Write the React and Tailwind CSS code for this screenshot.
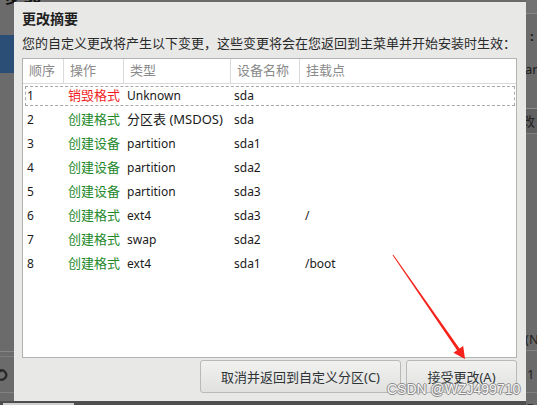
import React from "react";

const rows = [
  ["1", "销毁格式", true, "Unknown", "sda", ""],
  ["2", "创建格式", false, "分区表 (MSDOS)", "sda", ""],
  ["3", "创建设备", false, "partition", "sda1", ""],
  ["4", "创建设备", false, "partition", "sda2", ""],
  ["5", "创建设备", false, "partition", "sda3", ""],
  ["6", "创建格式", false, "ext4", "sda3", "/"],
  ["7", "创建格式", false, "swap", "sda2", ""],
  ["8", "创建格式", false, "ext4", "sda1", "/boot"],
];

function LeftStrip() {
  return (
    <div className="w-[14px] h-full flex flex-col bg-[#6b6b6b]">
      <div className="h-[35px] shrink-0" />
      <div className="h-[38px] shrink-0 bg-[#2a4e76]" />
      <div className="flex-1" />
      <div className="h-[1px] bg-[#868686]" />
      <div className="h-[4px]" />
      <div className="h-[1px] bg-[#7c7c7c]" />
      <div className="h-[11px]" />
      <div className="h-[14px] flex items-center">
        <svg width="10" height="14" viewBox="0 0 10 14" className="-ml-[2px]">
          <path d="M1 3.2 A4.6 4.6 0 1 1 1 10.8" fill="none" stroke="#262626" strokeWidth="2.2" />
          <path d="M0 0.5 L4.5 3.2 L0 5.6 Z" fill="#262626" />
        </svg>
      </div>
      <div className="h-[10px]" />
      <div className="h-[1px] bg-[#828282]" />
      <div className="h-[12px]" />
    </div>
  );
}

function RightStrip() {
  return (
    <div className="w-[11px] h-full flex flex-col bg-[#6b6b6b] text-[#1c1c1c] text-[13px] leading-none overflow-hidden">
      <div className="h-[13px] bg-[#737373] shrink-0" />
      <div className="h-[1px] bg-[#888888] shrink-0" />
      <div className="h-[16px] shrink-0" />
      <div className="pl-[4px] h-[12px] font-bold shrink-0">:</div>
      <div className="h-[21px] shrink-0" />
      <div className="h-[14px] -ml-[1px] shrink-0">ar</div>
      <div className="h-[31px] shrink-0" />
      <div className="h-[1px] bg-[#8e8e8e] shrink-0" />
      <div className="h-[24px] bg-[#606060] flex items-center -ml-[4px] text-[#222] shrink-0">改</div>
      <div className="h-[1px] bg-[#808080] shrink-0" />
      <div className="flex-1" />
      <div className="h-[14px] -ml-[1px] text-[#222] shrink-0">(N</div>
      <div className="h-[3px] shrink-0" />
      <div className="h-[1px] bg-[#858585] shrink-0" />
      <div className="h-[17px] shrink-0" />
      <div className="h-[14px] pl-[1px] text-[#222] shrink-0">1</div>
      <div className="h-[10px] shrink-0" />
      <div className="h-[1px] bg-[#808080] shrink-0" />
      <div className="h-[4px] shrink-0" />
      <div className="h-[8px] pl-[1px] text-[#333] shrink-0">–</div>
    </div>
  );
}

function Table() {
  return (
    <div className="w-[495px] h-[300px] bg-white border border-[#b3b3b1] flex flex-col">
      <div className="h-[25px] flex border-b border-[#dadada] text-[13px] text-[#8a8a8a] shrink-0">
        <div className="w-[41px] border-r border-[#dadada] pl-[6px] flex items-center">顺序</div>
        <div className="w-[60px] border-r border-[#dadada] pl-[6px] flex items-center">操作</div>
        <div className="w-[107px] border-r border-[#dadada] pl-[6px] flex items-center">类型</div>
        <div className="w-[69px] border-r border-[#dadada] pl-[6px] flex items-center">设备名称</div>
        <div className="flex-1 pl-[6px] flex items-center">挂载点</div>
      </div>
      {rows.map((r, i) => (
        <div key={i} className="relative h-[24px] flex items-center text-[12px] text-[#1a1a1a] shrink-0">
          {i === 0 && (
            <div className="absolute top-[2px] bottom-[2px] left-[2px] right-[1px] border border-dashed border-[#a8a8a8]" />
          )}
          <div className="w-[41px] pl-[4px]">{r[0]}</div>
          <div className={"w-[60px] pl-[4px] text-[13px] " + (r[2] ? "text-[#f01e1e]" : "text-[#24882a]")}>{r[1]}</div>
          <div className={"w-[107px] pl-[3px] " + (r[3].startsWith("分") ? "text-[13px]" : "")}>{r[3]}</div>
          <div className="w-[69px] pl-[3px]">{r[4]}</div>
          <div className="flex-1 pl-[5px]">{r[5]}</div>
        </div>
      ))}
      <div className="flex-1" />
    </div>
  );
}

function Btn({ w, children }) {
  return (
    <div
      className={
        "h-[33px] rounded-[3px] border border-[#b9b9b6] bg-gradient-to-b from-[#f1f1f0] to-[#e1e1df] flex items-center justify-center text-[13px] text-[#2e3436] pt-[3px] " +
        w
      }
    >
      {children}
    </div>
  );
}

export default function App() {
  return (
    <div className="relative w-[537px] h-[405px] overflow-hidden bg-[#6b6b6b] font-['Noto_Sans','Noto_Sans_CJK_SC',sans-serif]">
      <div className="flex justify-between h-full">
        <LeftStrip />
        <RightStrip />
      </div>

      {/* top heading fragment behind dialog */}
      <div className="absolute left-[5px] -top-[10px] text-[15px] font-bold text-[#111] leading-none">步 30</div>

      {/* bottom band */}
      <div className="absolute left-0 bottom-0 w-[526px] h-[4px] bg-[#4e4e4e]">
        <div className="absolute left-[3px] bottom-0 w-[71px] h-[2px] bg-[#cfcfcf]" />
      </div>

      {/* dialog */}
      <div className="absolute left-[14px] top-[2px] w-[512px] h-[399px] bg-[#e8e8e7] flex flex-col pl-[8px] pt-[7px] pb-[8px]">
        <div className="h-[20px] leading-[20px] text-[14px] font-bold text-[#1e1e1e]">更改摘要</div>
        <div className="mt-[5px] h-[18px] leading-[18px] text-[13px] text-[#2a2a2a] whitespace-nowrap">
          您的自定义更改将产生以下变更，这些变更将会在您返回到主菜单并开始安装时生效：
        </div>
        <div className="mt-[6px]">
          <Table />
        </div>
        <div className="mt-[2px] flex justify-end gap-[5px] pr-[9px]">
          <Btn w="w-[201px]">取消并返回到自定义分区(C)</Btn>
          <Btn w="w-[111px]">接受更改(A)</Btn>
        </div>
      </div>

      {/* red arrow annotation */}
      <svg className="absolute left-0 top-0" width="537" height="405" viewBox="0 0 537 405">
        <polygon
          points="392.6,255.3 457.1,350.2 453.4,352.7 465,359 463.2,345.9 459.5,348.4 393.4,254.7"
          fill="#f5231b"
        />
      </svg>

      {/* watermark */}
      <div className="absolute left-[387px] top-[380px] text-[14px] leading-[18px] font-['Liberation_Sans',sans-serif] text-[#f6f6f6] whitespace-nowrap [text-shadow:-1px_0_#8c8c8c,1px_0_#8c8c8c,0_-1px_#8c8c8c,0_1px_#8c8c8c]">
        CSDN @WZJ499710
      </div>
    </div>
  );
}
